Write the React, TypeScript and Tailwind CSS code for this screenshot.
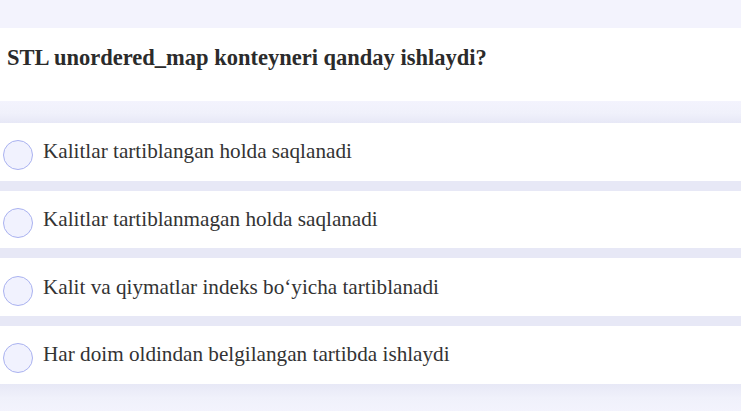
import React from "react";

const options = [
  "Kalitlar tartiblangan holda saqlanadi",
  "Kalitlar tartiblanmagan holda saqlanadi",
  "Kalit va qiymatlar indeks bo‘yicha tartiblanadi",
  "Har doim oldindan belgilangan tartibda ishlaydi",
];

export default function App() {
  return (
    <div className="w-[741px] h-[411px] bg-[#f3f3fd] pt-[28px] font-['Liberation_Serif',serif] overflow-hidden">
      <div className="bg-white h-[73px] pl-[7px] pt-[17px]">
        <h2 className="text-[22.5px] font-bold text-[#2b2b2b] leading-[26px]">
          STL unordered_map konteyneri qanday ishlaydi?
        </h2>
      </div>
      <div className="pt-[22px] pb-[28px] bg-[linear-gradient(to_bottom,#f3f3fd_0px,#f0f1fb_12px,#e7e8f6_22px,#e7e8f6_calc(100%_-_28px),#f0f1fb_calc(100%_-_14px),#f3f3fd_100%)]">
        <div className="flex flex-col gap-[10px]">
          {options.map((o) => (
            <div key={o} className="bg-white h-[57.7px] flex items-center pl-[3px]">
              <span className="w-[30px] h-[30px] rounded-full border border-[#aab2f0] bg-[#f1f2fe] mt-[7px] shrink-0" />
              <span className="ml-[10px] text-[21.2px] text-[#333333] leading-[24px] mb-[1px]">{o}</span>
            </div>
          ))}
        </div>
      </div>
    </div>
  );
}
